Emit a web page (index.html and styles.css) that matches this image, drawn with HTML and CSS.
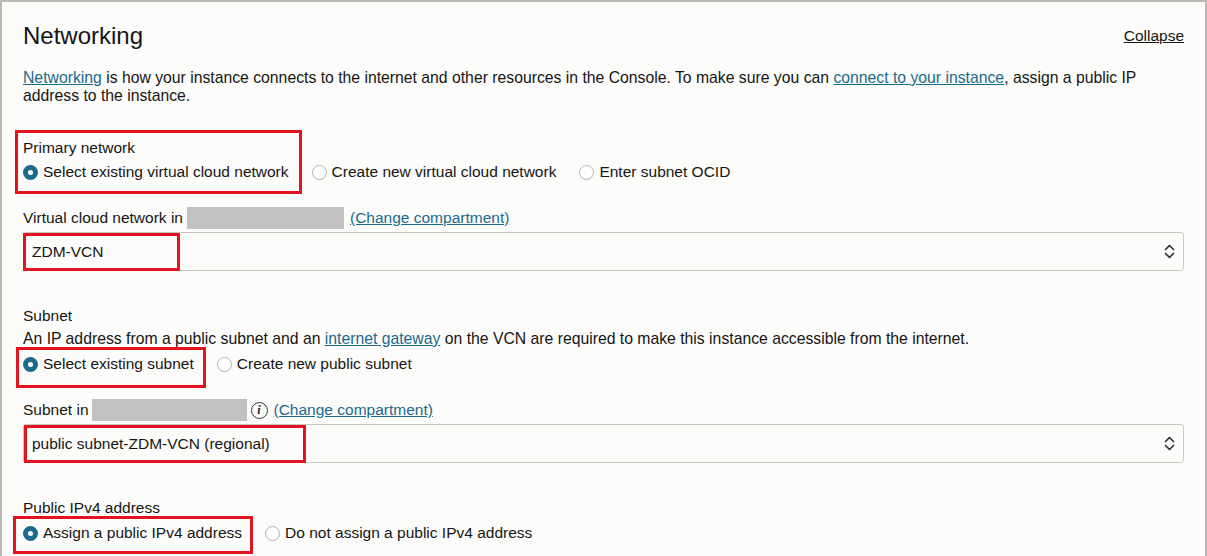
FILE: index.html
```html
<!DOCTYPE html>
<html>
<head>
<meta charset="utf-8">
<link rel="stylesheet" href="styles.css">
</head>
<body>
<div class="panel">
  <div class="head">
    <h2 class="title">Networking</h2>
    <a class="collapse">Collapse</a>
  </div>
  <p class="desc"><a class="link">Networking</a> is how your instance connects to the internet and other resources in the Console. To make sure you can <a class="link">connect to your instance</a>, assign a public IP address to the instance.</p>

  <div class="group g-primary">
    <div class="label">Primary network</div>
    <div class="radios">
      <label class="radio on"><span class="dot"></span>Select existing virtual cloud network</label>
      <label class="radio"><span class="dot"></span>Create new virtual cloud network</label>
      <label class="radio"><span class="dot"></span>Enter subnet OCID</label>
    </div>
  </div>

  <div class="field-head fh-vcn">
    <span>Virtual cloud network in</span>
    <span class="redact r1"></span>
    <a class="link">(Change compartment)</a>
  </div>
  <div class="select">
    <span>ZDM-VCN</span>
    <svg class="chev" width="11" height="15" viewBox="0 0 11 15"><path d="M1.5 5.5 L5.5 1.5 L9.5 5.5 M1.5 9.5 L5.5 13.5 L9.5 9.5" fill="none" stroke="#333" stroke-width="1.7" stroke-linecap="round" stroke-linejoin="round"/></svg>
  </div>

  <div class="group g-subnet">
    <div class="label">Subnet</div>
    <div class="label help">An IP address from a public subnet and an <a class="link">internet gateway</a> on the VCN are required to make this instance accessible from the internet.</div>
    <div class="radios">
      <label class="radio on"><span class="dot"></span>Select existing subnet</label>
      <label class="radio"><span class="dot"></span>Create new public subnet</label>
    </div>
  </div>

  <div class="field-head fh-subnet">
    <span>Subnet in</span>
    <span class="redact r2"></span>
    <span class="info">i</span>
    <a class="link">(Change compartment)</a>
  </div>
  <div class="select">
    <span>public subnet-ZDM-VCN (regional)</span>
    <svg class="chev" width="11" height="15" viewBox="0 0 11 15"><path d="M1.5 5.5 L5.5 1.5 L9.5 5.5 M1.5 9.5 L5.5 13.5 L9.5 9.5" fill="none" stroke="#333" stroke-width="1.7" stroke-linecap="round" stroke-linejoin="round"/></svg>
  </div>

  <div class="group g-ip">
    <div class="label">Public IPv4 address</div>
    <div class="radios">
      <label class="radio on"><span class="dot"></span>Assign a public IPv4 address</label>
      <label class="radio"><span class="dot"></span>Do not assign a public IPv4 address</label>
    </div>
  </div>

  <div class="mark m1"></div>
  <div class="mark m2"></div>
  <div class="mark m3"></div>
  <div class="mark m4"></div>
  <div class="mark m5"></div>
</div>
</body>
</html>
```

FILE: styles.css
```css
* { box-sizing: border-box; }
html, body { margin: 0; padding: 0; background: #fcfcfb; }
body {
  font-family: "Liberation Sans", Arial, sans-serif;
  color: #161513;
  font-size: 15.5px;
  overflow: hidden;
}
.panel {
  position: relative;
  width: 1207px;
  height: 556px;
  border: 2px solid #bcb9b3;
  border-bottom: none;
  padding: 21px 21px 0 21px;
  background: #fcfcfb;
}
.head {
  display: flex;
  justify-content: space-between;
  align-items: center;
  height: 26px;
}
.title {
  margin: 0;
  font-size: 24px;
  font-weight: normal;
  line-height: 26px;
}
.collapse {
  color: #161513;
  text-decoration: underline;
  font-size: 15.5px;
}
.link {
  color: #1a6a8c;
  text-decoration: underline;
}
.desc {
  margin: 20px 0 0 0;
  line-height: 18px;
  font-size: 15.75px;
}
.label {
  line-height: 19px;
}
.help { font-size: 15.75px; }
.radios {
  display: flex;
  align-items: center;
  height: 22px;
  gap: 23px;
}
.radio {
  display: flex;
  align-items: center;
  gap: 5px;
}
.dot {
  width: 15px;
  height: 15px;
  border-radius: 50%;
  border: 1px solid #b4b2ae;
  background: #fff;
  flex: none;
}
.radio.on .dot {
  border: 5px solid #1c6a8c;
  background: #fff;
}
.g-primary { margin-top: 33px; }
.g-primary .radios { margin-top: 4px; }
.field-head {
  display: flex;
  align-items: center;
  height: 22px;
}
.fh-vcn { margin-top: 24px; }
.fh-vcn .redact { margin: 0 6px 0 4px; width: 157px; }
.redact {
  display: inline-block;
  height: 22px;
  background: #c1c1c1;
}
.fh-subnet { margin-top: 24px; }
.fh-subnet .redact { margin: 0 4px 0 3px; width: 155px; }
.info {
  width: 17px;
  height: 17px;
  border: 1.5px solid #333;
  border-radius: 50%;
  display: inline-flex;
  align-items: center;
  justify-content: center;
  font-family: "Liberation Serif", serif;
  font-style: italic;
  font-weight: bold;
  font-size: 12px;
  margin-right: 6px;
  color: #222;
}
.select {
  margin-top: 3px;
  height: 39px;
  border: 1px solid #c9c8c4;
  border-radius: 3px;
  display: flex;
  align-items: center;
  justify-content: space-between;
  padding: 0 8px 0 8px;
  background: #fcfcfb;
}
.g-subnet { margin-top: 35px; }
.g-subnet .help { margin-top: 4px; }
.g-subnet .radios { margin-top: 5px; }
.g-ip { margin-top: 35px; }
.g-ip .radios { margin-top: 5px; }
.mark {
  position: absolute;
  border: 3px solid #e3141e;
}
.m1 { left: 13px; top: 128px; width: 287px; height: 64px; }
.m2 { left: 21px; top: 231px; width: 157px; height: 38px; }
.m3 { left: 14px; top: 345px; width: 190px; height: 41px; }
.m4 { left: 22px; top: 423px; width: 282px; height: 38px; }
.m5 { left: 11px; top: 514px; width: 240px; height: 38px; }
```
